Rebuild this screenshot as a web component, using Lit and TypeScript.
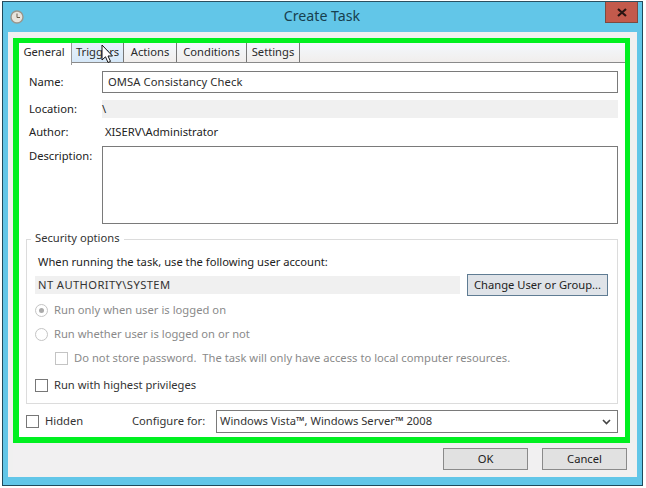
import { LitElement, html, css } from "lit";
import { customElement } from "lit/decorators.js";

@customElement("app-root")
export class AppRoot extends LitElement {
  static styles = css`
    :host { display: block; width: 646px; height: 488px; background: #fff; position: relative; overflow: hidden;
      font-family: "Noto Sans", "Open Sans", sans-serif; font-size: 11.2px; color: #222; }
    * { box-sizing: border-box; }
    .win { margin: 1px 0 0 2px; width: 641px; height: 485px; background: #62c6e8; border: 1px solid #1f4a5c; border-top-color: #2b4f60; display: flex; flex-direction: column; padding: 0 5px 8px 5px; }
    .title { height: 30px; flex: none; display: flex; align-items: center; justify-content: center; position: relative; font-size: 14.2px; color: #17404f; padding-bottom: 3px; }
    .title span { margin-left: -1px; }
    .clock { position: absolute; left: 2px; top: 8px; }
    .close { position: absolute; right: -1px; top: 0; width: 33px; height: 21px; background: #c35a4c; border: 1px solid #7c4a40; border-top: none; display: flex; align-items: center; justify-content: center; }
    .client { flex: 1; background: #f0f0f0; display: flex; flex-direction: column; padding: 6px 7px 0 5px; }
    .green { width: 617px; height: 405px; border-style: solid; border-color: #00f020; border-width: 5px 5px 6px 6px; background: #fff; display: flex; flex-direction: column; flex: none; }
    .tabs { height: 20px; flex: none; display: flex; background: linear-gradient(#f3f8fd, #f1eeec); border-bottom: 1px solid #8a8a8a; }
    .tab { height: 19px; display: flex; align-items: center; justify-content: center; border-right: 1px solid #777; color: #2a2a2a; padding-bottom: 2px; }
    .tab.active { background: #fff; height: 22px; width: 53px; border-right: 1px solid #999; padding: 0 2px 6px 0; position: relative; z-index: 1; }
    .tab.hover { background: linear-gradient(#e6f1fb, #d6e8f8); width: 52px; }
    .w53 { width: 53px; }
    .w70 { width: 70px; }
    .form { flex: 1; padding: 8px 7px 0 8px; display: flex; flex-direction: column; }
    .row { display: flex; align-items: center; }
    .lab { width: 75px; flex: none; padding: 0 0 2px 2px; }
    .field { border: 1px solid #7a7a7a; background: #fff; flex: 1; display: flex; align-items: center; padding: 0 0 2px 5px; color: #2c2c2c; }
    .name { height: 22px; letter-spacing: 0.1px; }
    .ro { height: 18px; background: #f0f0f0; flex: 1; padding: 0 0 2px 0; display: flex; align-items: center; }
    .loc { margin-top: 7px; }
    .auth { margin-top: 5px; height: 18px; }
    .auth .v { padding: 0 0 2px 3px; }
    .desc { margin-top: 5px; align-items: flex-start; }
    .desc .lab { padding-top: 2px; }
    .desc .field { height: 78px; flex: 1; }
    .group { margin-top: 15px; margin-left: -1px; height: 165px; border: 1px solid #dcdcdc; position: relative; padding: 13px 8px 0 8px; display: flex; flex-direction: column; }
    .legend { position: absolute; left: 4px; top: -10px; background: #fff; padding: 0 4px; line-height: 16px; color: #333; }
    .acct { height: 18px; display: flex; align-items: center; padding: 0 0 2px 3px; }
    .line2 { display: flex; align-items: center; margin-top: 3px; height: 22px; }
    .sys { width: 425px; height: 18px; background: #f0f0f0; display: flex; align-items: center; padding: 0 0 2px 3px; color: #333; letter-spacing: 0.4px; }
    .btn { background: #dfe3e8; border: 1px solid #5f7c93; display: flex; align-items: center; justify-content: center; color: #222; padding-bottom: 2px; }
    .chg { width: 141px; height: 22px; margin-left: 7px; }
    .opt { display: flex; align-items: center; height: 18px; color: #8a8a8a; padding-bottom: 2px; }
    .o1 { margin-top: 5px; letter-spacing: 0.03px; }
    .o2 { margin-top: 6px; }
    .o3 { margin-top: 6px; padding-left: 20px; letter-spacing: 0.02px; }
    .o4 { margin-top: 9px; color: #333; }
    .radio { width: 13px; height: 13px; border-radius: 50%; border: 1px solid #c4c4c4; background: #fff; margin: 2px 6px 0 0; flex: none; display: flex; align-items: center; justify-content: center; }
    .radio i { width: 5px; height: 5px; border-radius: 50%; background: #aaa; display: block; }
    .cb { width: 13px; height: 13px; border: 1px solid #c4c4c4; background: #fff; margin: 2px 6px 0 0; flex: none; }
    .cb.dark { border-color: #777; }
    .bottom { display: flex; align-items: center; height: 23px; margin-top: 6px; margin-left: -1px; }
    .hid { display: flex; align-items: center; width: 106px; color: #333; padding-bottom: 2px; }
    .hid .cb { margin-right: 6px; }
    .cfg { width: 84px; flex: none; color: #333; padding-bottom: 2px; }
    .sel { flex: 1; height: 23px; border: 1px solid #7a7a7a; display: flex; align-items: center; justify-content: space-between; padding: 0 6px 2px 3px; color: #333; }
    .sel svg { margin-top: 2px; }
    .foot { flex: 1; display: flex; justify-content: flex-end; align-items: flex-start; gap: 14px; padding: 5px 6px 0 0; background: #f1f0f1; margin-right: -3px; }
    .foot .btn { width: 85px; height: 22px; background: #e1e1e1; border-color: #8a8a8a; }
    .cursor { position: absolute; left: 101px; top: 44px; }
  `;

  render() {
    return html`
      <div class="win">
        <div class="title">
          <svg class="clock" width="14" height="14" viewBox="0 0 14 14">
            <circle cx="7" cy="7" r="6" fill="#e8e4dc" stroke="#9a968c" stroke-width="1.4"/>
            <path d="M7 3.5V7.5H10" fill="none" stroke="#6b5f4e" stroke-width="1"/>
          </svg>
          <span>Create Task</span>
          <div class="close">
            <svg width="10" height="9" viewBox="0 0 10 9"><path d="M1 1L9 8M9 1L1 8" stroke="#2a1512" stroke-width="2.2"/></svg>
          </div>
        </div>
        <div class="client">
          <div class="green">
            <div class="tabs">
              <div class="tab active">General</div>
              <div class="tab hover">Triggers</div>
              <div class="tab w53">Actions</div>
              <div class="tab w70">Conditions</div>
              <div class="tab w53">Settings</div>
            </div>
            <div class="form">
              <div class="row">
                <div class="lab">Name:</div>
                <div class="field name">OMSA Consistancy Check</div>
              </div>
              <div class="row loc">
                <div class="lab">Location:</div>
                <div class="ro">\\</div>
              </div>
              <div class="row auth">
                <div class="lab">Author:</div>
                <div class="v">XISERV\\Administrator</div>
              </div>
              <div class="row desc">
                <div class="lab">Description:</div>
                <div class="field"></div>
              </div>
              <div class="group">
                <div class="legend">Security options</div>
                <div class="acct">When running the task, use the following user account:</div>
                <div class="line2">
                  <div class="sys">NT AUTHORITY\\SYSTEM</div>
                  <div class="btn chg">Change User or Group...</div>
                </div>
                <div class="opt o1"><div class="radio"><i></i></div>Run only when user is logged on</div>
                <div class="opt o2"><div class="radio"></div>Run whether user is logged on or not</div>
                <div class="opt o3"><div class="cb"></div>Do not store password.&nbsp; The task will only have access to local computer resources.</div>
                <div class="opt o4"><div class="cb dark"></div>Run with highest privileges</div>
              </div>
              <div class="bottom">
                <div class="hid"><div class="cb dark"></div>Hidden</div>
                <div class="cfg">Configure for:</div>
                <div class="sel">
                  <span>Windows Vista™, Windows Server™ 2008</span>
                  <svg width="9" height="6" viewBox="0 0 9 6"><path d="M1 1L4.5 4.5L8 1" fill="none" stroke="#444" stroke-width="1.6"/></svg>
                </div>
              </div>
            </div>
          </div>
          <div class="foot">
            <div class="btn">OK</div>
            <div class="btn">Cancel</div>
          </div>
        </div>
      </div>
      <svg class="cursor" width="13" height="21" viewBox="0 0 13 21">
        <path d="M1 1V16L4.5 12.8L7 18.5L9.5 17.4L7 12H11.5Z" fill="#fff" stroke="#111" stroke-width="1"/>
      </svg>
    `;
  }
}
